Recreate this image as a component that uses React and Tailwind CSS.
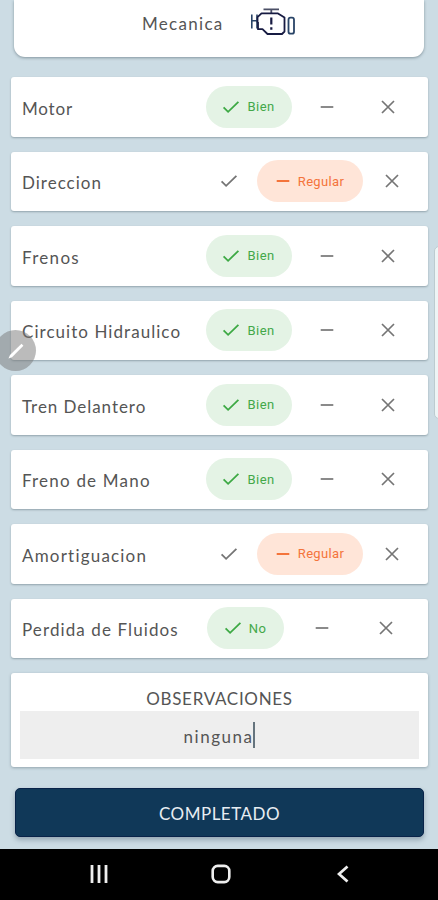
const CHECKS = [
  { label: 'Motor', tracking: 'tracking-[0.8px]', state: 'good' },
  { label: 'Direccion', tracking: 'tracking-[1px]', state: 'regular' },
  { label: 'Frenos', tracking: 'tracking-[1.3px]', state: 'good' },
  { label: 'Circuito Hidraulico', tracking: 'tracking-[1.05px]', state: 'good' },
  { label: 'Tren Delantero', tracking: 'tracking-[0.95px]', state: 'good' },
  { label: 'Freno de Mano', tracking: 'tracking-[1.2px]', state: 'good' },
  { label: 'Amortiguacion', tracking: 'tracking-[1.2px]', state: 'regular' },
  { label: 'Perdida de Fluidos', tracking: 'tracking-[1.1px]', state: 'no' },
]

const CheckIcon = ({ className = 'text-[#757575]' }) => (
  <svg width="18" height="18" viewBox="0 0 18 18" fill="none" stroke="currentColor" strokeWidth="1.8" className={`shrink-0 ${className}`}>
    <path d="M1.6 9.3 6.1 13.8 16.4 3.8" />
  </svg>
)

const DashIcon = ({ className = 'text-[#8a8a8a]' }) => (
  <svg width="14" height="18" viewBox="0 0 14 18" fill="none" stroke="currentColor" strokeWidth="2" className={`shrink-0 ${className}`}>
    <path d="M.7 9H13.3" />
  </svg>
)

const CrossIcon = () => (
  <svg width="14" height="14" viewBox="0 0 14 14" fill="none" stroke="currentColor" strokeWidth="1.7" className="shrink-0 text-[#757575]">
    <path d="m1 1 12 12M13 1 1 13" />
  </svg>
)

const EngineIcon = () => (
  <svg width="48" height="30" viewBox="0 0 48 30" fill="none" stroke="#171b42" strokeWidth="1.8">
    <path d="M14.5 2.3H30M22.3 2.3V6" stroke="#4b4f66" />
    <path d="M2.8 7.5v14M8 7.5v14M2.8 13.8H8" stroke="#294467" strokeWidth="1.6" />
    <path d="M8.5 15.5V10.2L12.500 6.400H29L35.5 10.5V24.5L33 27H18.5L13.5 22.2H9V15" strokeLinejoin="round" />
    <path d="M22.3 10.5v7M22.3 20.2v2.5" strokeWidth="2.2" />
    <rect x="39.500" y="10.700" width="5.500" height="16" rx="2" stroke="#294467" strokeWidth="1.8" />
  </svg>
)

const Rating = ({ state }) => {
  if (state === 'regular') {
    return (
      <div className="flex w-[220px] items-center font-[Roboto,sans-serif] text-[13px]">
        <button className="flex w-[57px] justify-center"><CheckIcon /></button>
        <button className="flex h-[42px] w-[106px] items-center justify-center gap-2 rounded-full bg-[#ffe5d8] tracking-[0.35px] text-[#f4743b]">
          <DashIcon className="text-[#f4743b]" />
          Regular
        </button>
        <button className="flex w-[57px] justify-center"><CrossIcon /></button>
      </div>
    )
  }

  const isNo = state === 'no'
  return (
    <div className="flex w-[214px] items-center font-[Roboto,sans-serif] text-[13px]">
      <button
        className={`flex h-[42px] items-center justify-center gap-[7px] rounded-full bg-[#e4f3e5] tracking-[0.5px] text-[#43a849] ${
          isNo ? 'ml-[1px] w-[77px]' : 'w-[86px]'
        }`}
      >
        <CheckIcon className="text-[#3da944]" />
        {isNo ? 'No' : 'Bien'}
      </button>
      <button className={`flex justify-center ${isNo ? 'w-[76px]' : 'w-[70px]'}`}><DashIcon /></button>
      <button className="flex w-[53px] justify-center"><CrossIcon /></button>
    </div>
  )
}

const CheckRow = ({ label, tracking, state }) => (
  <div className="flex h-[59.5px] items-center justify-between rounded-[3px] bg-white pl-[11px] shadow-[0_1px_2px_rgba(60,80,90,0.4)]">
    <span className={`mt-[3px] whitespace-nowrap text-[17px] ${tracking}`}>{label}</span>
    <div className={state === 'regular' ? 'mr-[8px]' : 'mr-[8.4px]'}>
      <Rating state={state} />
    </div>
  </div>
)

const App = () => (
  <div className="relative flex h-[900px] w-[438px] flex-col overflow-hidden bg-[#ccdce4] font-[Lato,sans-serif] text-[#555]">
    <header className="mx-[14px] flex h-[57px] shrink-0 items-start rounded-b-[11px] bg-white pl-[128px] shadow-[0_1px_3px_rgba(60,80,90,0.5)]">
      <span className="mt-[11px] w-[107px] text-[17px] tracking-[1.3px]">Mecanica</span>
      <div className="mt-[7px]"><EngineIcon /></div>
    </header>

    <main className="mt-5 ml-[11px] flex w-[417px] flex-col gap-[15px]">
      {CHECKS.map((check) => (
        <CheckRow key={check.label} {...check} />
      ))}

      <section className="h-[94px] rounded-[3px] bg-white px-[9px] pt-[14px] text-center shadow-[0_1px_3px_rgba(60,80,90,0.4)]">
        <h2 className="h-[24px] text-[17px] leading-[24px] tracking-[0.7px]">OBSERVACIONES</h2>
        <div className="flex h-[48px] items-center justify-center bg-[#eee] text-[17px] tracking-[1.5px]">
          <span className="mt-[3px]">ninguna</span>
          <span className="h-[26px] w-[2px] bg-[#65747d]" />
        </div>
      </section>
    </main>

    <button className="mt-[21px] ml-[15px] h-[49px] w-[409px] shrink-0 rounded-[5px] border border-[#092349] bg-[#103858] pt-[3px] text-[17px] tracking-[0.5px] text-[#e8edf2] shadow-[0_3px_5px_rgba(50,70,90,0.35)]">
      COMPLETADO
    </button>

    <nav className="mt-auto flex h-[51px] shrink-0 items-center bg-black pb-[2px] text-[#eee]">
      <svg width="18" height="18" viewBox="0 0 18 18" stroke="currentColor" strokeWidth="2.8" className="ml-[90px]">
        <path d="M2 0v18M9 0v18M16 0v18" />
      </svg>
      <svg width="20" height="20" viewBox="0 0 20 20" fill="none" stroke="currentColor" strokeWidth="2.6" className="ml-[103px]">
        <rect x="1.7" y="1.9" width="16.6" height="16.2" rx="5" />
      </svg>
      <svg width="12" height="18" viewBox="0 0 12 18" fill="none" stroke="currentColor" strokeWidth="2.8" className="ml-[106px]">
        <path d="M10.5 1.5 2 9l8.500 7.500" />
      </svg>
    </nav>

    {/* floating edit bubble and edge panel handle */}
    <div className="absolute top-[330px] -left-[5px] flex h-[41px] w-[41px] items-center justify-center rounded-full bg-[#777]/50">
      <svg width="18" height="18" viewBox="0 0 18 18" className="text-white">
        <path d="M3 13 14.500 1.800l1.900 2L5 15.300l-3.500 1.200Z" fill="currentColor" />
      </svg>
    </div>
    <div className="absolute top-[246px] left-[434px] h-[173px] w-[10px] rounded-[5px] border border-[#bccbd0] bg-[#edf4f5]" />
  </div>
)

export default App
